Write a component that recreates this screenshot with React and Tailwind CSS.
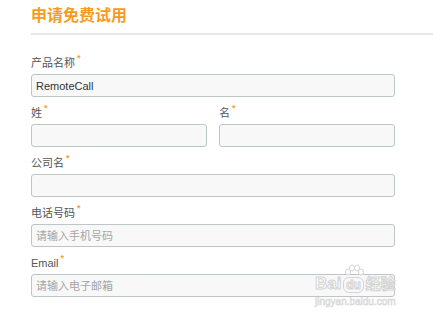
import React from "react";

const font = { fontFamily: '"Liberation Sans", "Noto Sans CJK SC", sans-serif' };

function Label({ children }) {
  return (
    <div className="h-[16px] leading-[16px] text-[11px] text-[#555]">
      {children}
      <span className="relative top-[-6px] ml-[2px] text-[9px] font-bold text-[#f8a040]">*</span>
    </div>
  );
}

function Input({ value, placeholder, className = "" }) {
  return (
    <input
      readOnly
      value={value}
      placeholder={placeholder}
      className={`mt-[3px] block h-[23px] rounded-[3px] border border-[#bcc6c6] bg-[#f8f8f8] px-[4px] text-[11px] text-[#333] placeholder:text-[#a5a5a5] outline-none ${className}`}
      style={font}
    />
  );
}

export default function App() {
  return (
    <div className="relative h-[319px] w-[433px] overflow-hidden bg-white" style={font}>
      <div className="pl-[31px] pt-[4px]">
        <div className="h-[24px] text-[16px] font-bold leading-[24px] text-[#f89b1c]">申请免费试用</div>
        <div className="mt-[5px] h-[2px] bg-[#e8e8e8]" />
        <div className="mt-[20px] flex flex-col gap-[8px]">
          <div>
            <Label>产品名称</Label>
            <Input value="RemoteCall" className="w-[364px]" />
          </div>
          <div className="flex gap-[12px]">
            <div>
              <Label>姓</Label>
              <Input value="" className="w-[176px]" />
            </div>
            <div>
              <Label>名</Label>
              <Input value="" className="w-[176px]" />
            </div>
          </div>
          <div>
            <Label>公司名</Label>
            <Input value="" className="w-[364px]" />
          </div>
          <div>
            <Label>电话号码</Label>
            <Input value="" placeholder="请输入手机号码" className="w-[364px]" />
          </div>
          <div>
            <Label>Email</Label>
            <Input value="" placeholder="请输入电子邮箱" className="w-[364px]" />
          </div>
        </div>
      </div>
      <div className="pointer-events-none absolute left-[315px] top-[264px] flex flex-col items-center">
        <div className="flex items-end text-[17px] font-bold leading-[18px] text-white [-webkit-text-stroke:1px_#d4d4d4]">
          <span>Bai</span>
          <span className="relative mx-[1px] flex flex-col items-center">
            <svg width="22" height="12" viewBox="0 0 22 12" className="mb-[1px]">
              <ellipse cx="5" cy="8" rx="2.5" ry="3" fill="white" stroke="#d4d4d4" />
              <ellipse cx="9" cy="4" rx="2.5" ry="3" fill="white" stroke="#d4d4d4" />
              <ellipse cx="14" cy="4" rx="2.5" ry="3" fill="white" stroke="#d4d4d4" />
              <ellipse cx="18" cy="8" rx="2.5" ry="3" fill="white" stroke="#d4d4d4" />
            </svg>
            <span className="rounded-[6px] border border-[#d4d4d4] px-[2px] text-[12px] leading-[14px]">du</span>
          </span>
          <span className="text-[15px]">经验</span>
        </div>
        <div className="mt-[3px] text-[10px] leading-[12px] text-white [-webkit-text-stroke:0.6px_#d4d4d4]">jingyan.baidu.com</div>
      </div>
    </div>
  );
}
